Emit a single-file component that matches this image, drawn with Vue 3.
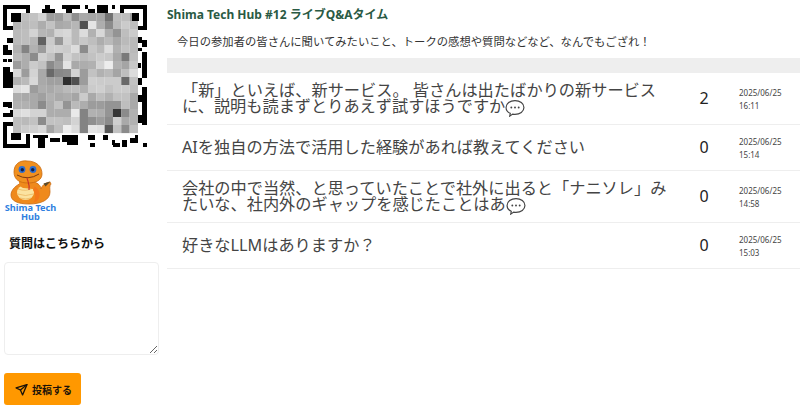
<script setup>
const grays = [
  [175,190,195,215,150,150,185,135,165,160,160,100,190,190,150],
  [180,185,190,170,195,165,170,180,60,235,170,130,185,205,190],
  [185,190,215,180,175,215,220,185,225,175,220,170,140,190,205],
  [185,190,180,80,205,145,215,185,200,190,170,185,165,185,185],
  [175,120,175,150,210,210,205,225,130,200,185,225,175,195,185],
  [185,170,130,210,195,140,215,195,185,195,205,200,165,110,190],
  [150,170,205,195,130,155,235,165,170,175,215,245,175,160,200],
  [220,150,215,165,90,125,130,215,150,195,175,185,160,190,225],
  [175,185,220,165,155,155,20,60,150,210,205,205,205,90,195],
  [225,235,150,170,165,175,185,190,175,205,210,195,205,205,190],
  [170,165,165,155,175,165,170,160,205,165,190,175,195,195,165],
  [175,175,165,130,170,195,140,185,170,150,150,140,140,190,165],
  [220,230,215,215,170,170,170,240,120,175,170,140,30,130,175],
  [190,185,195,130,195,195,190,215,120,135,150,130,210,165,175],
  [190,205,210,220,160,190,245,225,120,235,230,70,195,130,190]
]
const soften = g => Math.round(g + (190 - g) * 0.15)
const mosaic = grays.flatMap((row, r) =>
  row.map((g, c) => ({ x: 13 + c * 8.33, y: 13 + r * 8, fill: `rgb(${soften(g)},${soften(g)},${soften(g)})` }))
)
const blacks = [
  [42,9,13,4],[45,5,5,4],[62,5,18,4],[66,9,6,4],[85,5,3,4],[88,9,7,4],[97,5,11,8],[112,5,3,4],
  [7,38,6,5],[3,45,5,8],[3,50,9,5],[3,59,4,3],[8,59,4,3],[3,67,7,5],[3,72,10,16],[3,102,5,5],[8,102,4,6],[3,113,9,4],[10,110,3,7],
  [138,37,4,6],[142,40,5,7],[138,48,4,3],[142,52,5,26],[138,63,3,5],[138,78,4,7],[142,87,5,38],[138,95,4,7],[138,115,4,8],
  [33,135,15,3],[38,138,7,10],[50,138,10,4],[62,135,16,7],[67,142,11,3],[88,135,7,5],[90,143,5,4],[103,135,5,5],[112,140,3,5],[113,143,7,4],[122,140,5,7],[130,138,8,5],[135,135,3,3],[143,143,4,4]
]
const centers = [[11,13,10,9],[132,13,7,8],[11,133,10,7]]
const questions = [
  { text: '「新」といえば、新サービス。 皆さんは出たばかりの新サービスに、説明も読まずとりあえず試すほうですか', more: true, count: 2, date: '2025/06/25', time: '16:11' },
  { text: 'AIを独自の方法で活用した経験があれば教えてください', more: false, count: 0, date: '2025/06/25', time: '15:14' },
  { text: '会社の中で当然、と思っていたことで社外に出ると「ナニソレ」みたいな、社内外のギャップを感じたことはあ', more: true, count: 0, date: '2025/06/25', time: '14:58' },
  { text: '好きなLLMはありますか？', more: false, count: 0, date: '2025/06/25', time: '15:03' }
]
</script>

<template>
  <div class="page">
    <aside class="side">
      <svg class="qr" width="150" height="150" viewBox="0 0 150 150">
        <rect v-for="(m, i) in mosaic" :key="i" :x="m.x" :y="m.y" width="8.4" height="8.1" :fill="m.fill" />
        <rect v-for="(b, i) in blacks" :key="'b' + i" :x="b[0]" :y="b[1]" :width="b[2]" :height="b[3]" fill="#000" />
        <rect v-for="(c, i) in centers" :key="'c' + i" :x="c[0]" :y="c[1]" :width="c[2]" :height="c[3]" fill="#000" />
        <path d="M3 5h27v8h-4V9H7v17h6v4H3zM120 5h27v25h-9v-4h5V9h-19v4h-4zM3 122h10v4H7v18h19v-10h4v14H3z" fill="#000" />
      </svg>

      <svg class="logo" width="60" height="69" viewBox="0 155 60 69">
        <path d="M50 182c-6 1-8 4-9 7 0-3-3-6-7-7l-9 0c-9 2-14 8-14 13 0 6 7 9 18 9 12 0 21-4 21-12 0-3-1-6 1-8z" fill="#ef8a1c" stroke="#c9690f" stroke-width=".8" />
        <path d="M50.500 181.500l-7 2 2 3z" fill="#5a4a2a" />
        <ellipse cx="25.500" cy="192.500" rx="8.500" ry="7.500" fill="#fbe3a0" />
        <path d="M18 189q8 3 15-1M17.500 194q8 3 16 0M20 198q6 2 11 0" fill="none" stroke="#e8b25a" stroke-width=".7" />
        <path d="M34 186c4 2 7 7 5 12-1 3-4 4-6 5 3-4 3-9 0-13z" fill="#f4781a" />
        <path d="M20 178c-2 4-1 8 3 10l10 1c3-3 3-8 1-11z" fill="#ef8a1c" />
        <path d="M14 172c0-8 6-12 13-11 9 0 15 5 15 13 0 6-6 9-14 9s-14-3-14-11z" fill="#f0901f" stroke="#c9690f" stroke-width=".8" />
        <circle cx="22" cy="169.500" r="3.400" fill="#2f6fd0" />
        <circle cx="33" cy="169.500" r="3.400" fill="#2f6fd0" />
        <circle cx="22.300" cy="169.800" r="1.700" fill="#10204a" />
        <circle cx="32.700" cy="169.800" r="1.700" fill="#10204a" />
        <path d="M17 175q11 6 22-1" fill="none" stroke="#7a3a10" stroke-width="1" />
        <path d="M27 178c1 4 3 7 2 12" fill="none" stroke="#c8302a" stroke-width="1.100" />
        <text class="logo-text" x="30.500" y="211">Shima Tech</text>
        <text class="logo-text" x="30.500" y="220">Hub</text>
      </svg>

      <h2 class="ask">質問はこちらから</h2>
      <textarea class="box"></textarea>
      <button class="send" type="button">
        <svg width="13" height="13" viewBox="0 0 24 24" fill="none" stroke="#1a1208" stroke-width="2.400" stroke-linejoin="round" stroke-linecap="round">
          <path d="M22 3 2 9l8 4 4 9z" />
          <path d="M22 3 10 13" />
        </svg>
        <span>投稿する</span>
      </button>
    </aside>

    <main class="main">
      <h1 class="title">Shima Tech Hub #12 ライブQ&amp;Aタイム</h1>
      <p class="lead">今日の参加者の皆さんに聞いてみたいこと、トークの感想や質問などなど、なんでもござれ！</p>
      <div class="band"></div>
      <div v-for="(q, i) in questions" :key="i" class="row">
        <div class="q">{{ q.text }}<svg v-if="q.more" class="bubble" width="20" height="19" viewBox="0 0 19 18" fill="none" stroke="#444" stroke-width="1.100">
            <path d="M5 14.500C2.500 13.500 1 11.500 1 9c0-3.800 3.800-6.500 8.500-6.500S18 5.200 18 9s-3.800 6.500-8.500 6.500c-.8 0-1.500-.1-2.200-.2L4.500 17.200z" />
            <circle cx="6" cy="9" r=".9" fill="#444" stroke="none" />
            <circle cx="9.500" cy="9" r=".9" fill="#444" stroke="none" />
            <circle cx="13" cy="9" r=".9" fill="#444" stroke="none" />
          </svg></div>
        <div class="count">{{ q.count }}</div>
        <div class="stamp">{{ q.date }}<br />{{ q.time }}</div>
      </div>
    </main>
  </div>
</template>

<style scoped>
.page {
  display: flex;
  width: 800px;
  height: 411px;
  overflow: hidden;
  font-family: "Noto Sans", "Noto Sans CJK JP", sans-serif;
  background: #fff;
}
.side {
  width: 167px;
  flex: none;
  display: flex;
  flex-direction: column;
  align-items: flex-start;
}
.qr {
  display: block;
  flex: none;
  filter: blur(0.6px);
}
.logo {
  display: block;
  flex: none;
  margin-top: 5px;
}
.logo-text {
  font-size: 9.200px;
  font-weight: 700;
  fill: #2f7fe0;
  text-anchor: middle;
}
.ask {
  margin: 11px 0 0 9px;
  font-size: 12px;
  line-height: 17px;
  font-weight: 700;
  color: #111;
}
.box {
  display: block;
  box-sizing: border-box;
  margin: 10px 0 0 4px;
  width: 155px;
  height: 93px;
  border: 1px solid #eeeeee;
  border-radius: 4px;
  background: #fff;
  outline: none;
}
.send {
  display: flex;
  align-items: center;
  gap: 4px;
  margin: 18px 0 0 4px;
  padding: 0 0 0 11px;
  width: 77px;
  height: 32px;
  border: none;
  border-radius: 3px;
  background: #ff9800;
  color: #1a1208;
  font-family: inherit;
  font-size: 10px;
  font-weight: 700;
}
.main {
  width: 633px;
  flex: none;
}
.title {
  margin: 6px 0 0;
  font-size: 12px;
  line-height: 17px;
  font-weight: 700;
  color: #2a5a44;
}
.lead {
  margin: 11px 0 0;
  padding-left: 10px;
  font-size: 11.340px;
  line-height: 16px;
  color: #333;
}
.band {
  margin-top: 8px;
  height: 15px;
  background: #eeeeee;
}
.row {
  display: grid;
  grid-template-columns: 1fr 64px 64px;
  align-items: center;
  box-sizing: border-box;
  padding: 9px 0 10px 15px;
  border-bottom: 1px solid #eeeeee;
}
.q {
  font-size: 16.200px;
  line-height: 16px;
  color: #444;
}
.bubble {
  vertical-align: 3.500px;
  margin: -8px 0;
}
.count {
  text-align: center;
  font-size: 16px;
  color: #222;
}
.stamp {
  margin: 1px 0 -1px;
  padding-left: 3px;
  font-size: 8px;
  line-height: 13px;
  color: #444;
}
</style>
